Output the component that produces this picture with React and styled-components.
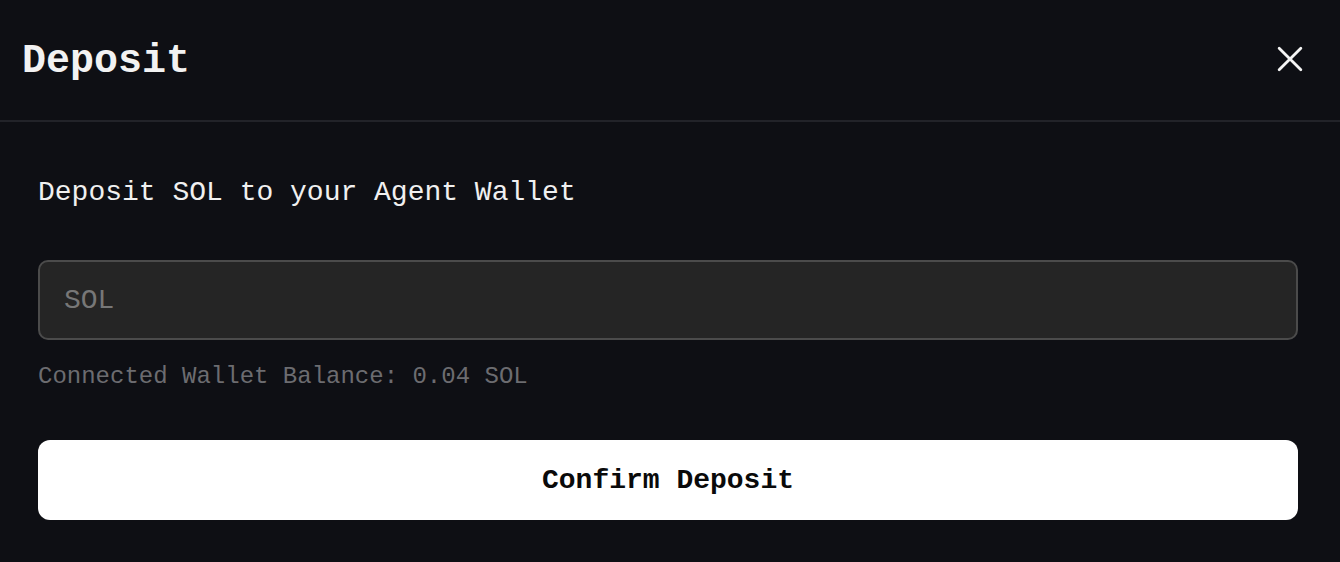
import React from "react";
import styled, { createGlobalStyle } from "styled-components";

const Global = createGlobalStyle`
  html, body { margin: 0; padding: 0; background: #0e0f14; }
  body { font-family: "Liberation Mono", "DejaVu Sans Mono", monospace; }
  * { box-sizing: border-box; }
`;

const Modal = styled.div`
  width: 1340px;
  height: 562px;
  background: #0e0f14;
  display: flex;
  flex-direction: column;
  overflow: hidden;
`;

const Header = styled.div`
  height: 122px;
  padding: 3px 22px 0 22px;
  display: flex;
  align-items: center;
  justify-content: space-between;
  border-bottom: 2px solid #222329;
`;

const Title = styled.h1`
  margin: 0;
  font-size: 40px;
  font-weight: 700;
  color: #f2f2f2;
  line-height: 48px;
`;

const CloseButton = styled.button`
  background: none;
  border: none;
  padding: 0;
  width: 40px;
  height: 40px;
  margin-right: 8px;
  margin-top: -6px;
  display: flex;
  align-items: center;
  justify-content: center;
  color: #f5f5f5;
  cursor: pointer;
`;

const Body = styled.div`
  padding: 51px 42px 0 38px;
  display: flex;
  flex-direction: column;
`;

const Label = styled.div`
  font-size: 28px;
  line-height: 40px;
  color: #f0f0f0;
`;

const Input = styled.input`
  margin-top: 47px;
  height: 80px;
  width: 100%;
  background: #252525;
  border: 2px solid #4b4b4b;
  border-radius: 10px;
  padding: 0 24px;
  font-family: inherit;
  font-size: 28px;
  color: #f0f0f0;
  outline: none;
  &::placeholder { color: #777777; }
`;

const Balance = styled.div`
  margin-top: 21px;
  font-size: 24px;
  line-height: 32px;
  color: #6c6c70;
`;

const Confirm = styled.button`
  margin-top: 47px;
  height: 80px;
  width: 100%;
  background: #ffffff;
  border: none;
  border-radius: 12px;
  font-family: inherit;
  font-size: 28px;
  font-weight: 700;
  color: #0a0a0a;
  cursor: pointer;
`;

export default function App() {
  return (
    <>
      <Global />
      <Modal>
        <Header>
          <Title>Deposit</Title>
          <CloseButton aria-label="Close">
            <svg width="26" height="26" viewBox="0 0 24 24" fill="none" stroke="currentColor" strokeWidth="2.6" strokeLinecap="round">
              <path d="M2 2 L22 22 M22 2 L2 22" />
            </svg>
          </CloseButton>
        </Header>
        <Body>
          <Label>Deposit SOL to your Agent Wallet</Label>
          <Input placeholder="SOL" />
          <Balance>Connected Wallet Balance: 0.04 SOL</Balance>
          <Confirm>Confirm Deposit</Confirm>
        </Body>
      </Modal>
    </>
  );
}
